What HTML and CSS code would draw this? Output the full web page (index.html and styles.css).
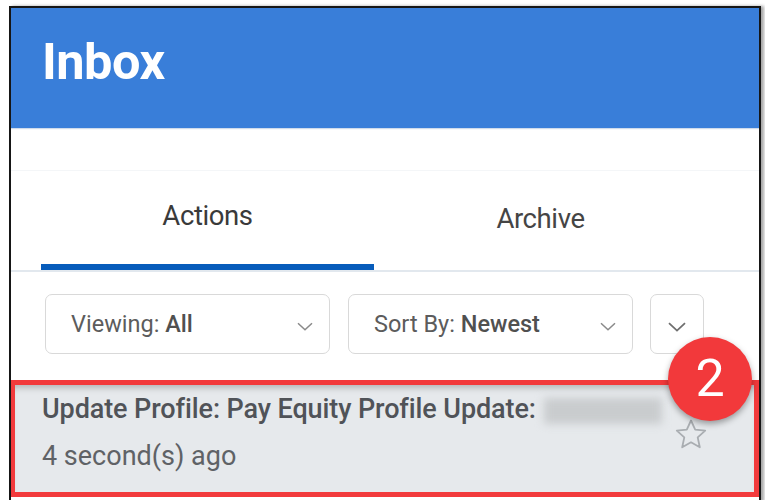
FILE: index.html
```html
<!DOCTYPE html>
<html lang="en">
<head>
<meta charset="utf-8">
<title>Inbox</title>
<link rel="stylesheet" href="styles.css">
</head>
<body>
<div class="frame">
  <header class="inbox-header">
    <h1 class="inbox-title">Inbox</h1>
  </header>

  <nav class="tabs">
    <div class="tab-list">
      <div class="tab tab-active"><span class="tab-label">Actions</span></div>
      <div class="tab"><span class="tab-label tab-label-low">Archive</span></div>
    </div>
  </nav>

  <div class="filters">
    <div class="select select-wide">
      <span class="select-text">Viewing: <strong>All</strong></span>
      <svg class="chevron" viewBox="0 0 16 9" width="16" height="9"><path d="M1 1.2 L8 7.8 L15 1.2" fill="none" stroke="#8a8a8a" stroke-width="1.5"/></svg>
    </div>
    <div class="select select-wide">
      <span class="select-text">Sort By: <strong>Newest</strong></span>
      <svg class="chevron" viewBox="0 0 16 9" width="16" height="9"><path d="M1 1.2 L8 7.8 L15 1.2" fill="none" stroke="#8a8a8a" stroke-width="1.5"/></svg>
    </div>
    <div class="select select-small">
      <svg class="chevron chevron-dark" viewBox="0 0 18 10" width="18" height="10"><path d="M1 1.2 L9 8.6 L17 1.2" fill="none" stroke="#6f6f6f" stroke-width="1.8"/></svg>
    </div>
  </div>

  <div class="item">
    <div class="item-title">Update Profile: Pay Equity Profile Update: <span class="redacted"></span></div>
    <div class="item-time">4 second(s) ago</div>
    <svg class="star" viewBox="0 0 34 32" width="34" height="32"><path d="M17 2.5 L21.2 11.6 L31.2 12.7 L23.7 19.4 L25.8 29.3 L17 24.3 L8.2 29.3 L10.3 19.4 L2.8 12.7 L12.8 11.6 Z" fill="none" stroke="#a9adb1" stroke-width="1.8" stroke-linejoin="round"/></svg>
    <div class="badge">2</div>
  </div>
</div>
</body>
</html>
```

FILE: styles.css
```css
html, body {
  margin: 0;
  padding: 0;
  background: #ffffff;
  overflow: hidden;
}

body {
  font-family: Roboto, "Liberation Sans", Arial, sans-serif;
}

.frame {
  margin: 6px 0 0 9px;
  width: 748px;
  height: 494px;
  overflow: hidden;
  border: 2px solid #161616;
  border-bottom: none;
  box-shadow: 3px 0 3px rgba(0, 0, 0, 0.35);
  background: #ffffff;
}

/* blue title bar */
.inbox-header {
  height: 120px;
  background: #397ed9;
  display: flex;
  align-items: center;
  padding-left: 31px;
  box-shadow: 0 1px 1px rgba(60, 110, 180, 0.25);
}

.inbox-title {
  margin: 0;
  color: #ffffff;
  font-size: 50.5px;
  font-weight: 700;
  letter-spacing: -0.5px;
  line-height: 1;
  transform: translateY(-6px);
}

/* tab strip */
.tabs {
  margin-top: 42px;
  border-top: 1px solid #f4f6f8;
  border-bottom: 2px solid #e2e8ee;
}

.tab-list {
  display: flex;
  padding-left: 30px;
}

.tab {
  width: 333px;
  height: 99px;
  box-sizing: border-box;
  padding-top: 30px;
  text-align: center;
  border-bottom: 6px solid transparent;
}

.tab-active {
  border-bottom-color: #075cbb;
}

.tab-label {
  font-size: 27.5px;
  line-height: 30px;
  color: #3a3a3a;
  letter-spacing: -0.4px;
}

.tab-label-low {
  display: inline-block;
  transform: translateY(3px);
  color: #454545;
}

/* filter dropdowns */
.filters {
  display: flex;
  gap: 18px;
  margin: 22px 0 0 34px;
}

.select {
  height: 60px;
  box-sizing: border-box;
  border: 1.5px solid #d9d9d9;
  border-radius: 7px;
  display: flex;
  align-items: center;
  background: #ffffff;
}

.select-wide {
  width: 285px;
  padding: 0 16px 0 25px;
  justify-content: space-between;
}

.select-small {
  width: 54px;
  margin-left: -1px;
  justify-content: center;
}

.select-text {
  font-size: 23.5px;
  color: #5c5c5c;
}

.select-text strong {
  font-weight: 500;
  color: #505050;
}

.chevron {
  display: block;
  margin-top: 4px;
}

.chevron-dark {
  margin-top: 6px;
}

/* highlighted inbox item */
.item {
  position: relative;
  margin: 26px 0 0 -1px;
  height: 117px;
  box-sizing: border-box;
  border: 5px solid #f23a3c;
  background: #e6e9ec;
  box-shadow: inset 0 7px 6px -4px rgba(0, 0, 0, 0.22);
  padding: 8px 0 0 27px;
}

.item-title {
  font-size: 27px;
  font-weight: 500;
  color: #505358;
  line-height: 32px;
  letter-spacing: -0.1px;
  white-space: nowrap;
}

.redacted {
  display: inline-block;
  vertical-align: middle;
  width: 118px;
  height: 26px;
  margin-left: 2px;
  background: #c9ccce;
  filter: blur(4px);
}

.item-time {
  margin-top: 16px;
  font-size: 27px;
  color: #5f6266;
  line-height: 30px;
}

.star {
  position: absolute;
  right: 46px;
  top: 33px;
}

.badge {
  position: absolute;
  right: 2px;
  top: -48px;
  width: 84px;
  height: 84px;
  border-radius: 50%;
  background: #f2393b;
  color: #ffffff;
  font-size: 52px;
  line-height: 84px;
  text-align: center;
  box-shadow: 0 3px 6px rgba(0, 0, 0, 0.35);
}
```
